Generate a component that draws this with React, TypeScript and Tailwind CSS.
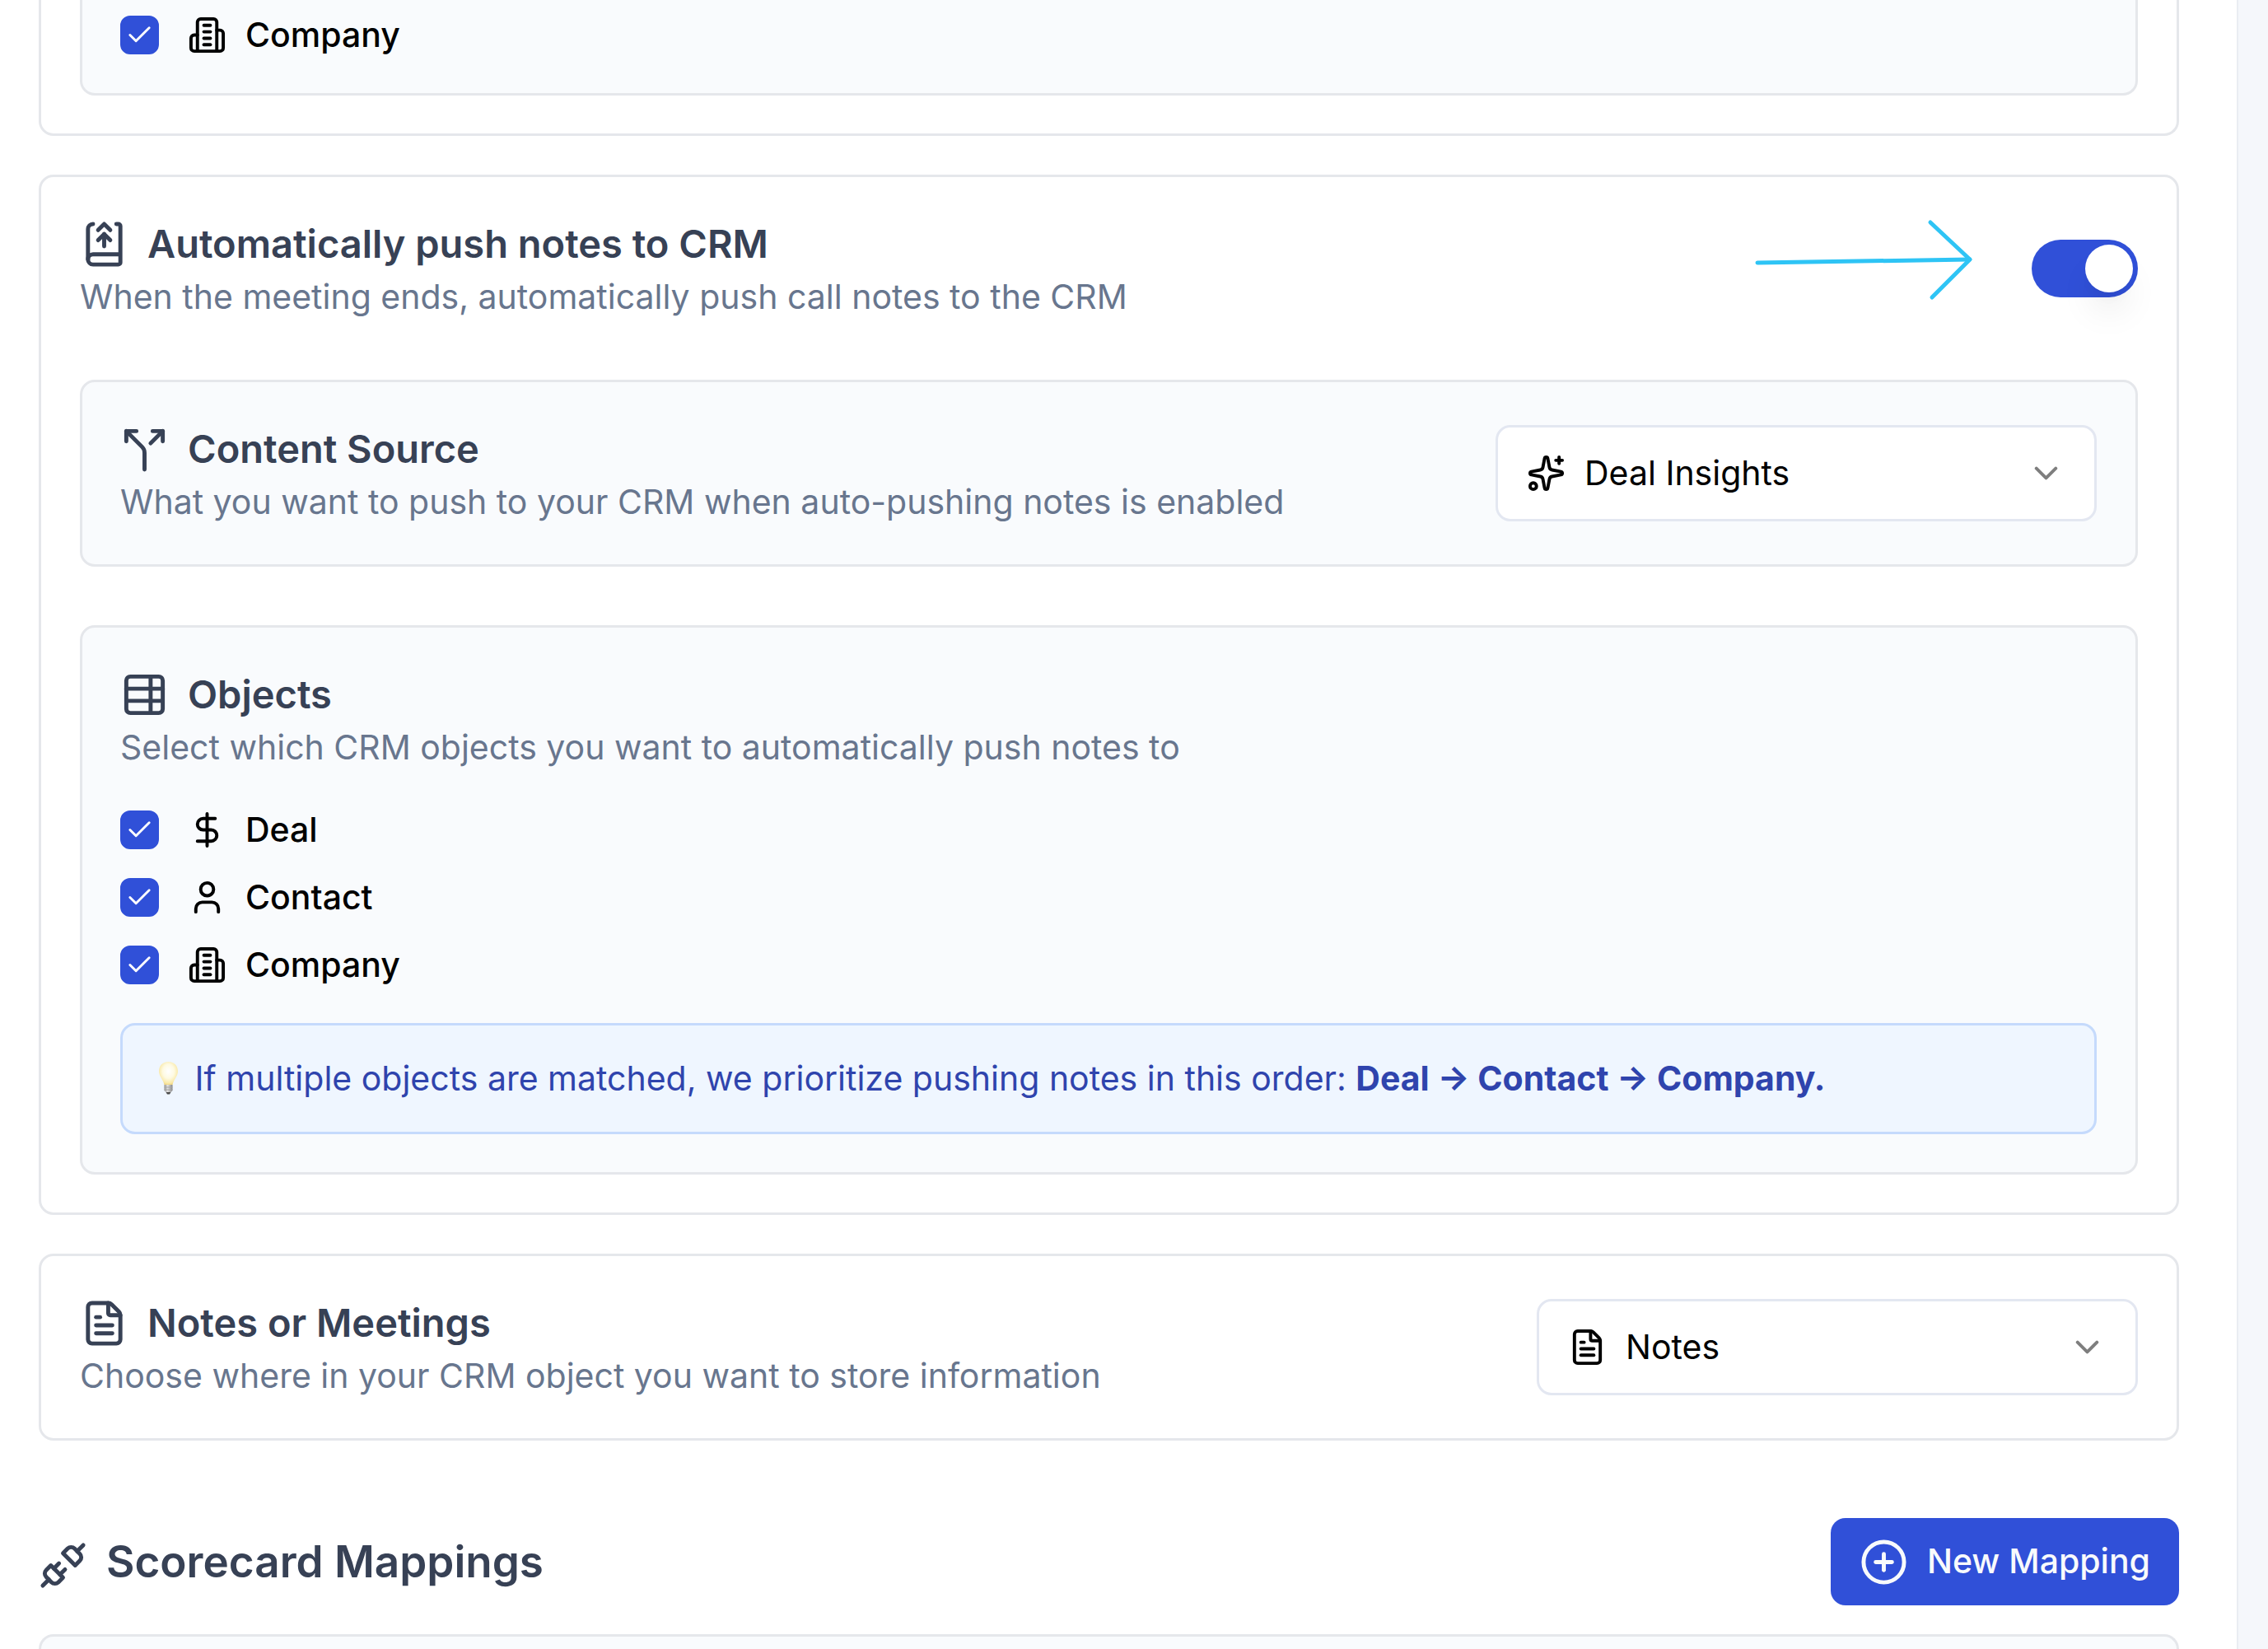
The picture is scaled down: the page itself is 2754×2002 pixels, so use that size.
import { useState, type ReactNode } from "react";
import {
  BookUp2,
  Check,
  ChevronDown,
  CirclePlus,
  DollarSign,
  FileText,
  Sparkles,
  Split,
  TableProperties,
  Unplug,
  User,
} from "lucide-react";

function OfficeIcon({ className }: { className?: string }) {
  return (
    <svg className={className} viewBox="0 0 24 24" fill="none" stroke="currentColor" strokeWidth="2" strokeLinecap="round" strokeLinejoin="round" aria-hidden="true">
      <path d="M6 22V4a2 2 0 0 1 2-2h8a2 2 0 0 1 2 2v18Z" />
      <path d="M6 12H4a2 2 0 0 0-2 2v6a2 2 0 0 0 2 2h2" />
      <path d="M18 9h2a2 2 0 0 1 2 2v9a2 2 0 0 1-2 2h-2" />
      <path d="M10 6h4" />
      <path d="M10 10h4" />
      <path d="M10 14h4" />
      <path d="M10 18h4" />
    </svg>
  );
}

function BulbIcon({ className }: { className?: string }) {
  return (
    <svg className={className} viewBox="0 0 41 48" role="img" aria-label="Tip">
      <defs>
        <radialGradient id="bulb-glass" cx="0.5" cy="0.42" r="0.6">
          <stop offset="0" stopColor="#ffffff" />
          <stop offset="0.5" stopColor="#fefae2" />
          <stop offset="0.85" stopColor="#f9e9a8" />
          <stop offset="1" stopColor="#eed27f" />
        </radialGradient>
        <linearGradient id="bulb-base" x1="0" x2="1">
          <stop offset="0" stopColor="#8f8f8f" />
          <stop offset="0.4" stopColor="#e2e2e2" />
          <stop offset="1" stopColor="#858585" />
        </linearGradient>
      </defs>
      <path d="M20.500 0C13.500 0 9 5 9 11.500c0 6.500 5 9.500 6.500 16.500h10C27 21 32 18 32 11.500 32 5 27.500 0 20.500 0Z" fill="url(#bulb-glass)" />
      <path d="M15.500 28h10v7l-2 2h-6l-2-2Z" fill="url(#bulb-base)" />
      <path d="M15.500 31h10M15.500 34h10" stroke="#a3a3a3" strokeWidth="1" />
      <path d="M17.500 37h6l-1.500 2.500h-3Z" fill="#4b4b4b" />
    </svg>
  );
}

type IconType = React.ComponentType<{ className?: string }>;

function SectionHeader({ icon: Icon, title, description }: { icon: IconType; title: string; description: string }) {
  return (
    <div className="min-w-0">
      <h3 className="flex items-center gap-[23px] text-[47px] leading-[70px] font-semibold text-[#374155]">
        <Icon className="size-[59px] shrink-0" />
        {title}
      </h3>
      <p className="text-[41px] leading-[59px] text-[#68768e]">{description}</p>
    </div>
  );
}

function Card({ children }: { children: ReactNode }) {
  return (
    <section className="rounded-[18px] border-3 border-[#e5e7eb] bg-white px-[47px] py-[46px]">{children}</section>
  );
}

function Panel({ children }: { children: ReactNode }) {
  return (
    <div className="rounded-[18px] border-3 border-[#e5e7eb] bg-[#f9fbfd] py-[46px] pr-[47px] pl-[46px]">{children}</div>
  );
}

function CheckRow({ id, label, icon: Icon }: { id: string; label: string; icon: IconType }) {
  const [checked, setChecked] = useState(true);
  return (
    <div className="flex h-[47px] items-center gap-[35px]">
      <span className="grid size-[47px] shrink-0">
        <input
          id={id}
          type="checkbox"
          checked={checked}
          onChange={(e) => setChecked(e.target.checked)}
          className="col-start-1 row-start-1 size-[47px] appearance-none rounded-[12px] border-3 border-[#3050d8] bg-white checked:bg-[#3050d8]"
        />
        {checked && (
          <Check className="pointer-events-none col-start-1 row-start-1 size-[35px] place-self-center text-white" />
        )}
      </span>
      <label htmlFor={id} className="flex items-center gap-[23px] text-[41px] leading-[47px] font-medium text-black">
        <Icon className="size-[47px]" />
        {label}
      </label>
    </div>
  );
}

function SelectBox({ label, icon: Icon, options }: { label: string; icon: IconType; options: string[] }) {
  return (
    <div className="flex h-[117px] w-[730px] shrink-0 items-center gap-[23px] rounded-[18px] border-3 border-[#e3e7f1] bg-white px-[35px] text-black">
      <Icon className="size-[47px] shrink-0" />
      <select aria-label={label} className="h-full min-w-0 flex-1 appearance-none bg-transparent text-[41px]">
        {options.map((option) => (
          <option key={option}>{option}</option>
        ))}
      </select>
      <ChevronDown className="pointer-events-none size-[47px] shrink-0 opacity-50" />
    </div>
  );
}

function Switch({ label }: { label: string }) {
  const [on, setOn] = useState(true);
  return (
    <button
      type="button"
      role="switch"
      aria-checked={on}
      aria-label={label}
      onClick={() => setOn(!on)}
      className={`flex h-[70px] w-[129px] shrink-0 items-center rounded-full px-[6px] ${on ? "justify-end bg-[#3050d8]" : "justify-start bg-[#e2e8f0]"}`}
    >
      <span className="size-[58px] rounded-full bg-white shadow-[0_29px_44px_-9px_rgba(0,0,0,0.1),0_12px_18px_-12px_rgba(0,0,0,0.1)]" />
    </button>
  );
}

function PointerArrow() {
  return (
    <svg className="h-[120px] w-[266px] -my-[10px]" viewBox="0 0 266 120" fill="none" stroke="#2ec4f5" strokeWidth="5" strokeLinecap="round" strokeLinejoin="round" aria-hidden="true">
      <path d="M4 53 262 49" />
      <path d="M214 4 262 49 216 95" />
    </svg>
  );
}

export default function App() {
  return (
    <div className="flex h-screen overflow-hidden bg-[#f5f7fb] font-[Inter,sans-serif]">
      <main className="mr-[36px] flex flex-1 flex-col border-r-2 border-[#eaedf2] bg-white pr-[70px] pl-[47px]">
        <section className="rounded-b-[18px] border-3 border-t-0 border-[#e5e7eb] px-[47px] pb-[46px]">
          <div className="rounded-b-[18px] border-3 border-t-0 border-[#e5e7eb] bg-[#f9fbfd] pt-[19px] pr-[47px] pb-[47px] pl-[46px]">
            <CheckRow id="summary-company" label="Company" icon={OfficeIcon} />
          </div>
        </section>

        <div className="mt-[47px] flex flex-col gap-[47px]">
          <Card>
            <div className="flex items-center justify-between">
              <SectionHeader
                icon={BookUp2}
                title="Automatically push notes to CRM"
                description="When the meeting ends, automatically push call notes to the CRM"
              />
              <div className="flex items-center gap-[71px]">
                <PointerArrow />
                <Switch label="Automatically push notes to CRM" />
              </div>
            </div>

            <div className="mt-[71px] flex flex-col gap-[71px]">
              <Panel>
                <div className="flex items-center justify-between">
                  <SectionHeader
                    icon={Split}
                    title="Content Source"
                    description="What you want to push to your CRM when auto-pushing notes is enabled"
                  />
                  <SelectBox label="Content Source" icon={Sparkles} options={["Deal Insights", "Call Notes"]} />
                </div>
              </Panel>

              <Panel>
                <SectionHeader
                  icon={TableProperties}
                  title="Objects"
                  description="Select which CRM objects you want to automatically push notes to"
                />
                <div className="my-[47px] flex flex-col gap-[35px]">
                  <CheckRow id="notes-deal" label="Deal" icon={DollarSign} />
                  <CheckRow id="notes-contact" label="Contact" icon={User} />
                  <CheckRow id="notes-company" label="Company" icon={OfficeIcon} />
                </div>
                <p className="rounded-[18px] border-3 border-[#c5dafc] bg-[#eff6ff] p-[35px] text-[41px] leading-[59px] text-[#2f44ad]">
                  <BulbIcon className="inline-block h-[48px] w-[41px] align-middle" /> If multiple objects are matched,
                  we prioritize pushing notes in this order:{" "}
                  <strong className="font-bold">Deal → Contact → Company.</strong>
                </p>
              </Panel>
            </div>
          </Card>

          <Card>
            <div className="flex items-center justify-between">
              <SectionHeader
                icon={FileText}
                title="Notes or Meetings"
                description="Choose where in your CRM object you want to store information"
              />
              <SelectBox label="Notes or Meetings" icon={FileText} options={["Notes", "Meetings"]} />
            </div>
          </Card>
        </div>

        <div className="mt-[94px] mb-[35px] flex items-center justify-between">
          <h2 className="text-[53px] leading-[82px] font-semibold text-[#374155]">
            <Unplug className="mr-[23px] inline-block size-[59px] align-middle" />
            Scorecard Mappings
          </h2>
          <button
            type="button"
            className="flex h-[106px] items-center gap-[23px] rounded-[18px] bg-[#3050d8] px-[35px] text-[41px] font-medium text-[#f8fafc]"
          >
            <CirclePlus className="size-[59px]" />
            New Mapping
          </button>
        </div>

        <div className="flex-1 rounded-t-[18px] border-3 border-b-0 border-[#e5e7eb] bg-[#f9fbfd]" />
      </main>
    </div>
  );
}
